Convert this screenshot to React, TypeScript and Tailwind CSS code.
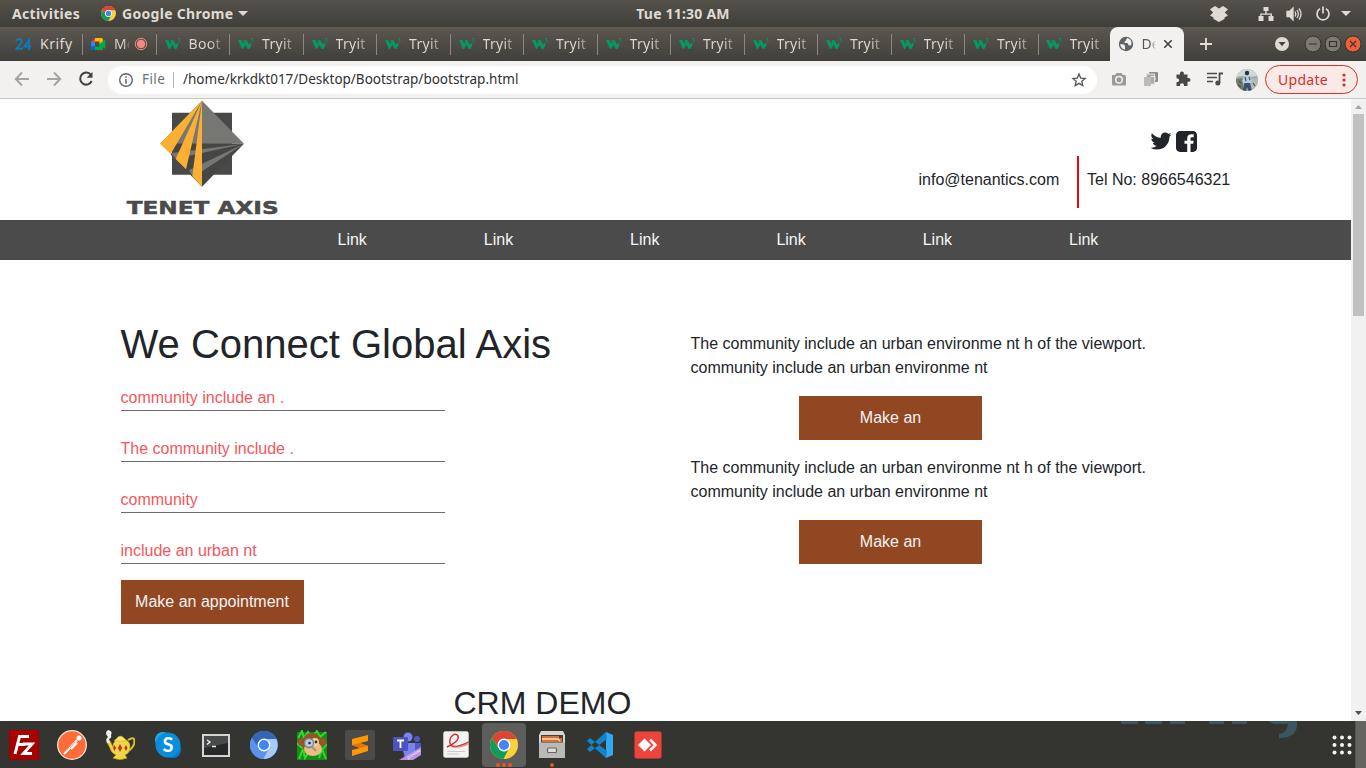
import React from "react";

const Chrome = ({ size, blue = false }: { size: number; blue?: boolean }) => (
  <svg width={size} height={size} viewBox="0 0 48 48" className="shrink-0">
    <circle cx="24" cy="24" r="24" fill={blue ? "#5a93ee" : "#fbd03a"} />
    <path d="M3.2 12A24 24 0 0 1 44.8 12L44.8 13.500H24A10.500 10.500 0 0 0 14.900 29.200Z" fill={blue ? "#3565b5" : "#db4437"} />
    <path d="M3.200 12A24 24 0 0 0 23 48L33.100 29.300A10.500 10.500 0 0 1 14.900 29.300Z" fill={blue ? "#5a93ee" : "#0f9d58"} />
    {blue && <path d="M44.800 13.500H24A10.500 10.500 0 0 1 33.100 29.300L23 48A24 24 0 0 0 44.800 13.500Z" fill="#a9c9fb" />}
    <circle cx="24" cy="24" r="11" fill="#fff" />
    <circle cx="24" cy="24" r="8.700" fill="#4285f4" />
  </svg>
);

const W3 = () => (
  <svg width="16" height="16" viewBox="0 0 16 16" className="shrink-0">
    <path d="M0 4H3.300L5.200 7.400 6.300 5.600 5.500 4H8.300L11 8.600 12.300 6.800 13.600 8.800 11.400 13H9.800L7.400 8.800 4.900 13H3.900Z" fill="#059862" />
    <path d="M13 2.500H15.200L14.100 3.900Q15.600 4.200 15.200 5.400Q14.600 6.500 12.900 5.900" fill="none" stroke="#059862" strokeWidth=".8" />
  </svg>
);

const Tab = ({ children, label }: { children: React.ReactNode; label: string }) => (
  <div className="flex h-[34px] w-[73.5px] shrink-0 items-center pl-[8px]">
    {children}
    <span className="ml-[8px] mt-[-2px] w-[34px] overflow-hidden whitespace-nowrap bg-gradient-to-r from-[#dedbd4] from-60% to-[#dedbd430] bg-clip-text text-[14px] tracking-[0.3px] text-transparent">{label}</span>
    <span className="ml-auto h-[21px] w-px bg-[#8b8880]" />
  </div>
);

const TabStrip = () => (
  <div className="flex h-[34px] bg-gradient-to-b from-[#5c5850] to-[#403f3a]">
    <div className="flex w-[83px] shrink-0 items-center pl-[15px]">
      <svg width="17" height="16" viewBox="0 0 17 16">
        <path d="M1 5Q1.500 3 4.500 3Q7 3.500 6.500 6Q6 8 1.500 12.700H8M14 14V4L9.300 10.600H16.500" fill="none" stroke="#0d79b5" strokeWidth="2" />
      </svg>
      <span className="ml-[8px] mt-[-2px] text-[14px] tracking-[0.5px] text-[#dedbd4]">Krify</span>
      <span className="ml-auto h-[21px] w-px bg-[#8b8880]" />
    </div>
    <div className="flex w-[73.5px] shrink-0 items-center pl-[8px]">
      <svg width="15" height="14" viewBox="0 0 15 14">
        <path d="M0 5L4 1V5Z" fill="#ea4335" />
        <path d="M0 5H4V9.500H0Z" fill="#2684fc" />
        <path d="M0 9.500H4V13H1.300Q0 13 0 11.700Z" fill="#0066da" />
        <path d="M4 1H10.500Q12 1 12 2.500V5L8.500 8V4.500H4Z" fill="#ffba00" />
        <path d="M4 9.500H8.500V7L14.300 2.300V12L12 10V11.700Q12 13 10.700 13H4Z" fill="#00ac47" />
      </svg>
      <span className="ml-[8px] mt-[-2px] w-[16px] overflow-hidden bg-gradient-to-r from-[#dedbd4] from-60% to-[#dedbd400] bg-clip-text text-[14px] text-transparent">Me</span>
      <svg width="14" height="14" viewBox="0 0 14 14" className="ml-[4px]">
        <circle cx="7" cy="7" r="5.700" fill="none" stroke="#f28b82" strokeWidth="1" />
        <circle cx="7" cy="7" r="4.200" fill="#f28b82" />
      </svg>
      <span className="ml-auto h-[21px] w-px bg-[#8b8880]" />
    </div>
    <Tab label="Boot"><W3 /></Tab>
    {Array.from({ length: 11 }, (_, i) => <Tab key={i} label="Tryit"><W3 /></Tab>)}
    <div className="flex w-[71px] shrink-0 items-center pl-[7px]">
      <W3 />
      <span className="ml-[8px] mt-[-2px] w-[34px] overflow-hidden bg-gradient-to-r from-[#dedbd4] from-60% to-[#dedbd430] bg-clip-text text-[14px] tracking-[0.3px] text-transparent">Tryit</span>
    </div>
    <div className="flex w-[74px] shrink-0 items-center rounded-t-[8px] bg-[#f2f1f0] pl-[8px]">
      <svg width="16" height="16" viewBox="0 0 16 16">
        <circle cx="8" cy="8" r="7.200" fill="#5f6368" />
        <path d="M2 8.300H5Q7 8.500 7 10.500V13.800Q3 13 2 8.300ZM9.500 2Q8 2.500 8 4.500Q6.500 4.500 6.500 7H9.500Q10 10 13 9.500Q14.500 5 11.500 3Z" fill="#f2f1f0" />
      </svg>
      <span className="ml-[8px] mt-[-2px] w-[14px] overflow-hidden bg-gradient-to-r from-[#55585b] from-60% to-transparent bg-clip-text text-[14px] text-transparent">De</span>
      <svg width="10" height="10" viewBox="0 0 10 10" className="ml-[7px]"><path d="M1.300 1.300L8.700 8.700M8.700 1.300L1.300 8.700" stroke="#3c4043" strokeWidth="1.600" /></svg>
    </div>
    <div className="flex flex-1 items-center pl-[16px]">
      <svg width="12" height="12" viewBox="0 0 12 12"><path d="M6 0V12M0 6H12" stroke="#e4e0d8" strokeWidth="1.800" /></svg>
      <svg width="14" height="14" viewBox="0 0 14 14" className="ml-auto"><circle cx="7" cy="7" r="7" fill="#dfdbd2" /><path d="M3.500 5H10.500L7 9.200Z" fill="#45433e" /></svg>
      <svg width="60" height="18" viewBox="0 0 60 18" className="ml-[12px]">
        <g stroke="#34332f">
          <circle cx="12" cy="9" r="8" fill="#7d7a72" /><circle cx="32" cy="9" r="8" fill="#7d7a72" /><circle cx="52" cy="9" r="8" fill="#ef6038" />
          <path d="M8 9H16M28.500 6.500H35.500V11.500H28.500ZM49 6L55 12M55 6L49 12" fill="none" strokeWidth="1.200" />
        </g>
      </svg>
      <span className="w-[5px]" />
    </div>
  </div>
);

const TopBar = () => (
  <div className="grid h-[27px] grid-cols-3 items-center bg-gradient-to-b from-[#55524b] to-[#3f3e39] text-[14px] font-bold text-[#dfdbd2]">
    <div className="flex items-center pl-[12px]">
      <span className="w-[89px] whitespace-nowrap tracking-[0.3px]">Activities</span>
      <Chrome size={15} />
      <span className="ml-[6px] w-[112px] whitespace-nowrap tracking-[0.300px]">Google Chrome</span>
      <svg width="10" height="5" viewBox="0 0 10 5" className="ml-[4px]"><path d="M0 0H10L5 5Z" fill="#dfdbd2" /></svg>
    </div>
    <div className="mt-[-1px] text-center tracking-[0.2px]">Tue 11:30 AM</div>
    <div className="flex items-center justify-end pr-[15px]">
      <svg width="20" height="18" viewBox="0 0 20 18" fill="#dfdbd2"><path d="M6 1L10 3.600 14 1 19 4.300 15.800 7.500 19 10.500 15.500 12.600V14L10 17 4.500 14V12.600L1 10.500 4.200 7.500 1 4.300Z" /></svg>
      <svg width="16" height="16" viewBox="0 0 16 16" className="ml-[29px]" fill="#dfdbd2"><path d="M5.500 1H10.500V5H8.700V7.500H14V10H15.500V15H10.500V10H12.500V8.800H3.500V10H5.500V15H.5V10H2.200V7.500H7.300V5H5.500Z" /></svg>
      <svg width="17" height="16" viewBox="0 0 17 16" className="ml-[12px]" fill="none" stroke="#dfdbd2" strokeWidth="1.300"><path d="M1 5.500H3.500L7 2V14L3.500 10.500H1Z" fill="#dfdbd2" /><path d="M9 5.500Q10.500 8 9 10.500M11 4Q13.700 8 11 12M13 2.500Q17 8 13 13.500" /></svg>
      <svg width="16" height="16" viewBox="0 0 16 16" className="ml-[12px]" fill="none" stroke="#dfdbd2" strokeWidth="1.700"><path d="M5 2.700A6 6 0 1 0 11 2.700M8 .5V7.500" /></svg>
      <svg width="10" height="5" viewBox="0 0 10 5" className="ml-[10px]"><path d="M0 0H10L5 5Z" fill="#dfdbd2" /></svg>
    </div>
  </div>
);

const Toolbar = () => (
  <div className="flex h-[38px] items-center border-b border-[#c9c8c7] bg-[#f2f1f0]">
    <svg width="108" height="37" viewBox="0 0 108 37" className="shrink-0" fill="none" strokeWidth="2">
      <path d="M29 18H16M22 11.500L15.800 18 22 24.500M47 18H60M54 11.500L60.200 18 54 24.500" stroke="#a5a4a3" />
      <path d="M91 14A6 6 0 1 0 91.700 20" stroke="#424242" />
      <path d="M92.500 11V16.800H86.500Z" fill="#424242" />
    </svg>
    <div className="flex h-[28px] w-[989px] shrink-0 items-center rounded-full bg-white pl-[11px] text-[13.500px]">
      <svg width="14" height="14" viewBox="0 0 14 14" fill="none" stroke="#5f6368"><circle cx="7" cy="7" r="6.300" strokeWidth="1.400" /><path d="M7 6V10.700M7 3.300V4.800" strokeWidth="1.500" /></svg>
      <span className="ml-[9px] w-[31px] tracking-[0.4px] text-[#6b7278]">File</span>
      <span className="h-[16px] w-px bg-[#b7babd]" />
      <span className="ml-[9px] whitespace-nowrap text-[#303134]">/home/krkdkt017/Desktop/Bootstrap/bootstrap.html</span>
      <svg width="16" height="16" viewBox="0 0 24 24" className="ml-auto mr-[10px]"><path d="M12 3L14.600 9.100 21.200 9.700 16.200 14 17.700 20.500 12 17.100 6.300 20.500 7.800 14 2.800 9.700 9.400 9.100Z" fill="none" stroke="#55585b" strokeWidth="2" /></svg>
    </div>
    <svg width="139" height="37" viewBox="0 0 139 37" className="shrink-0">
      <path d="M15 14H18L19.500 12H24.500L26 14H27.500Q29 14 29 15.500V23Q29 24.500 27.500 24.500H16.500Q15 24.500 15 23Z" fill="#9b9a99" />
      <circle cx="22" cy="18.700" r="3.300" fill="none" stroke="#f2f1f0" strokeWidth="1.500" />
      <rect x="52" y="11" width="9" height="10" rx="1" fill="#8e8d8c" /><rect x="49.500" y="13" width="8" height="10" fill="#aaa" stroke="#ddd" /><rect x="47" y="16" width="7" height="9" fill="#bbb" /><path d="M54 15.500H58V19" stroke="#eee" fill="none" />
      <path d="M79.500 13.500H83Q82.500 10.500 85 10.500Q87.300 10.500 86.800 13.500H90.500V17Q93.500 16.500 93.500 19Q93.500 21.200 90.500 20.800V25H87Q87.200 22.200 85 22.200Q82.800 22.200 83 25H79.500V21.200Q82.200 21.200 82.200 19.200Q82.200 17.200 79.500 17.200Z" fill="#474747" />
      <path d="M110 12.500H120M110 16.500H120M110 20.500H116" stroke="#4c4c4c" strokeWidth="1.600" /><path d="M122.500 22V12.500H126" fill="none" stroke="#4c4c4c" strokeWidth="1.800" /><circle cx="120.800" cy="22" r="2.500" fill="#4c4c4c" />
    </svg>
    <svg width="22" height="22" viewBox="0 0 22 22" className="shrink-0">
      <defs><clipPath id="avatar"><circle cx="11" cy="11" r="11" /></clipPath></defs>
      <g clipPath="url(#avatar)"><path d="M0 0H22V22H0Z" fill="#a3a79d" /><path d="M0 0H22V7L14 8 7 7 0 8Z" fill="#cbd8dc" /><path d="M0 10L7 9V22H0Z" fill="#737c6b" /><path d="M14 10L22 9V22H15Z" fill="#b5b9b6" /><path d="M8 6Q11 3 13.500 6L16 11 14 16 8 15 6 12Z" fill="#b5cbe0" /><path d="M8.500 14H14L16 22H12.500L11 18 10 22H6.500Z" fill="#39516b" /><circle cx="11" cy="4" r="2.200" fill="#37302a" /><path d="M3 12L5 14M2 16L5 18M17 14L19 17M9 8L10 12M13 8L14 11" stroke="#4a5549" strokeWidth="1.200" /></g>
    </svg>
    <div className="ml-[7px] flex h-[29px] w-[93px] shrink-0 items-center rounded-full border border-[#d93025] bg-[#fae9e7] pl-[12px] text-[14px] text-[#d2302a]">
      <span className="w-[52px] tracking-[0.300px]">Update</span>
      <svg width="4" height="14" viewBox="0 0 4 14" className="ml-[12px]" fill="#d2302a"><circle cx="2" cy="2" r="1.600" /><circle cx="2" cy="7" r="1.600" /><circle cx="2" cy="12" r="1.600" /></svg>
    </div>
  </div>
);

const Logo = () => (
  <svg width="190" height="121" viewBox="0 3 570 363" className="ml-[110px] shrink-0">
    <path d="M186 44H366V230H186Z" fill="#494a48" />
    <path d="M276 8L402 137H150Z" fill="#777874" />
    <path d="M200 137H402L276 266 182 170Z" fill="#464745" />
    <path d="M402 137L182 166 197 182ZM402 137L236 217 250 237Z" fill="#767773" />
    <path d="M276 8L150 137 182 168ZM276 8L197 183 228 214ZM276 8L247 235 276 266Z" fill="#fbb034" />
    <text x="50" y="347" textLength="456" lengthAdjust="spacingAndGlyphs" fontFamily="DejaVu Sans" fontWeight="700" fontSize="55" fill="#4b4b4b" stroke="#4b4b4b" strokeWidth="1.5">TENET AXIS</text>
  </svg>
);

const Header = () => (
  <header className="flex h-[121px]">
    <Logo />
    <div className="ml-[618px] flex-1">
      <div className="flex h-[57px] items-end gap-[3px] pb-[3px] pl-[230.5px]">
        <svg width="24" height="24" viewBox="0 0 1792 1792" fill="#212529"><path d="M1684 408q-67 98-162 167 1 14 1 42 0 130-38 259.500t-115.500 248.500-184.500 210.500-258 146-323 54.500q-271 0-496-145 35 4 78 4 225 0 401-138-105-2-188-64.500t-114-159.500q33 5 61 5 43 0 85-11-112-23-185.500-111.500t-73.500-205.500v-4q68 38 146 41-66-44-105-115t-39-154q0-88 44-163 121 149 294.500 238.500t371.500 99.500q-8-38-8-74 0-134 94.500-228.500t228.500-94.500q140 0 236 102 109-21 205-78-37 115-142 178 93-10 186-50z" /></svg>
        <svg width="21" height="21" viewBox="0 128 1536 1536" fill="#212529" className="mb-[1px]"><path d="M1248 128q119 0 203.500 84.500t84.500 203.500v960q0 119-84.500 203.500t-203.500 84.500h-188v-595h199l30-232h-229v-148q0-56 23.500-84t91.500-28l122-1v-207q-63-9-178-9-136 0-217.500 80t-81.500 226v171h-200v232h200v595h-532q-119 0-203.500-84.500t-84.500-203.500v-960q0-119 84.500-203.500t203.500-84.500h960z" /></svg>
      </div>
      <div className="flex h-[52px]">
        <span className="w-[159px] pl-[0.5px] pt-[12px]">info@tenantics.com</span>
        <span className="h-[52px] w-[2px] bg-[#f4000f]" />
        <span className="ml-[8px] pt-[12px]">Tel No: 8966546321</span>
      </div>
    </div>
  </header>
);

const Offer = () => (
  <div className="h-[124px]">
    <p>The community include an urban environme nt h of the viewport.</p>
    <p>community include an urban environme nt</p>
    <button className="ml-[108.5px] mt-[16px] block h-[44px] w-[183px] bg-[#914722] text-[#f4f2f1]">Make an</button>
  </div>
);

const Page = () => (
  <main className="h-[622px] w-[1351px] overflow-hidden bg-white font-['Liberation_Sans',sans-serif] text-[16px] leading-[24px] text-[#212529]">
    <Header />
    <nav className="flex h-[40px] items-center bg-[#4b4b4b] pl-[337.500px] text-[#f5f6f7]">
      {Array.from({ length: 6 }, (_, i) => <a key={i} className="w-[146.300px] shrink-0">Link</a>)}
    </nav>
    <section className="flex h-[423px] pl-[120.5px] pt-[60px]">
      <div className="w-[570px]">
        <h1 className="mb-[17px] text-[40px] leading-[48px]">We Connect Global Axis</h1>
        {["community include an .", "The community include .", "community", "include an urban nt"].map((t) => (
          <div key={t} className="mb-[25px] h-[26px] w-[324px] border-b border-[#6c6c6c] pt-px leading-[24px] text-[#f4575c]">{t}</div>
        ))}
        <button className="mt-[-9px] block h-[44px] w-[183px] bg-[#914722] text-[#f4f2f1]">Make an appointment</button>
      </div>
      <div className="pt-[12px]"><Offer /><Offer /></div>
    </section>
    <h2 className="ml-[453.500px] mt-px text-[32px] leading-[38px]">CRM DEMO</h2>
  </main>
);

const icons: React.ReactNode[] = [
  <g key="fz"><path d="M0 0H30V30H0Z" fill="#b20000" stroke="#850000" strokeWidth="1.500" strokeDasharray="2 2" /><path d="M0 8L30 0V30H0Z" fill="#9b0000" opacity=".5" /><path d="M6 24L10.500 6.500H20M8.500 14.500H16M14 14H23L14.500 23.500H23" fill="none" stroke="#fff" strokeWidth="3" /></g>,
  <g key="pm"><circle cx="15" cy="15" r="14.300" fill="#ff6c37" stroke="#f2e5df" strokeWidth="1.300" /><circle cx="22" cy="8" r="2.500" fill="#fff" /><path d="M20 10L12 19M20 13L14 19M12 19L7 24" stroke="#fff" strokeWidth="2" /><path d="M18 12L13 18" stroke="#ff6c37" strokeWidth=".8" /></g>,
  <g key="tea"><path d="M23 10Q31 5 29 14Q28 18 23 21" fill="none" stroke="#dfc331" strokeWidth="2" /><path d="M2 12L5 11 8 17Q8 9 16 9Q25 9 25 17Q25 23 20 25L22 28Q15 31 8 28L11 25Q6 23 5 18Z" fill="#f0d646" stroke="#c3a318" strokeWidth=".7" /><path d="M12 8Q15 4 19 8L22 11H9Z" fill="#f7e473" stroke="#c3a318" strokeWidth=".5" /><path d="M15 14L17 18 15 22 13 18ZM9.500 15L11 18 9.500 21 8 18ZM21 15L22.500 18 21 21 19.500 18Z" fill="#c72b29" /><path d="M2 13Q0 9 3 7Q-1 3 3 0Q8 1 6 5Q7 8 4 9L5 12Z" fill="#eee" /></g>,
  <g key="sk"><circle cx="10" cy="10" r="8" fill="#29a8e5" /><circle cx="20" cy="20" r="8" fill="#0878ce" /><circle cx="15" cy="15" r="12.500" fill="#078fdc" /><text x="15" y="22" textAnchor="middle" fontSize="20" fontWeight="700" fontFamily="Lato" fill="#fff">S</text></g>,
  <g key="term"><path d="M1 4H29V27H1Z" fill="#d4d4d0" /><path d="M3 6H27V25H3Z" fill="#272829" /><path d="M3 6H27V13L3 18Z" fill="#484949" /><path d="M6 10L9 12 6 14.500M11 16.500H15" fill="none" stroke="#eee" strokeWidth="1.400" /></g>,
  null,
  <g key="mon"><path d="M0 2H30V30H0Z" fill="#168d1a" /><path d="M1 8L5 1 7 8 11 2 14 8 20 1 23 7 29 2M2 29L6 19 8 28 12 22M29 29L25 19 22 28M0 13L5 18M30 14L26 19" fill="none" stroke="#31da2a" strokeWidth="2" /><circle cx="5" cy="12" r="4" fill="#9b572a" /><circle cx="25" cy="12" r="4" fill="#9b572a" /><ellipse cx="15" cy="14" rx="10" ry="11" fill="#985124" /><ellipse cx="16" cy="19" rx="9" ry="7" fill="#ecbc83" /><circle cx="18" cy="12" r="4" fill="#f0cda2" /><circle cx="19" cy="12" r="1.400" fill="#332" /><circle cx="12" cy="13" r="4.500" fill="#b3cce0" stroke="#75838e" strokeWidth="1.300" /><circle cx="12.500" cy="13" r="1.300" fill="#332" /><path d="M15 17L19 21" stroke="#999" strokeWidth="2" /></g>,
  <g key="sub"><rect width="30" height="30" rx="2" fill="#4b4b4c" /><path d="M7 9L23 5V11L15 13 23 16V21L7 26V20L15 18 7 15Z" fill="#ff9800" /><path d="M7 15L15 18 23 16 15 13Z" fill="#dc7614" /></g>,
  <g key="teams"><circle cx="15" cy="7" r="4.500" fill="#7b83eb" /><circle cx="24" cy="9" r="3" fill="#5059c9" /><path d="M20 13H28V24H20Z" fill="#5059c9" /><path d="M8 13H22V28H12Z" fill="#7b83eb" /><rect x="0" y="7" width="15" height="14" rx="1" fill="#4b53bc" /><path d="M4 10.500H11M7.500 10.500V18" stroke="#fff" strokeWidth="1.800" /><path d="M6 30L28 17V25L20 30Z" fill="#b993df" /><text transform="translate(15 29) rotate(-31)" fontFamily="Open Sans" fontSize="4" fill="#fff">preview</text></g>,
  <g key="pdf"><rect x="2.500" y="1.500" width="25" height="26" rx="2" fill="#f4f3f2" stroke="#ccc" strokeWidth=".7" /><path d="M6 17Q19 11 17 6Q14 2 10 7Q7 13 11 16Q16 18 28 12" fill="none" stroke="#d02932" strokeWidth="1.400" /><path d="M9 16.500Q18 18 28 12L28 14Q18 20 9 16.500Z" fill="#eb8a8c" /><path d="M6 21.500H24M6 24H18" stroke="#ccc" strokeWidth="1" /></g>,
  null,
  <g key="files"><path d="M4 1H26L28 5V28H2V5Z" fill="#d6d5d2" /><path d="M4 5H26V13H4Z" fill="#463e37" /><path d="M5 6H22V8H25V12H5V9Z" fill="#d86e35" /><path d="M5 9H21L23 11" fill="none" stroke="#ffe2bd" strokeWidth="1.300" /><path d="M2 12.500H28V28H2Z" fill="#b9b9b7" /><rect x="10.500" y="18" width="9" height="4.500" rx="1" fill="#ddd" stroke="#666" strokeWidth="1.200" /></g>,
  <g key="code"><path d="M21 2L28 5V25L21 28Z" fill="#32a9f1" /><path d="M21 2L2 19 5 22 22 9ZM21 28L2 11 5 8 22 21Z" fill="#1383cb" /></g>,
  <g key="any"><rect x="1.500" y="1.500" width="27" height="27" rx="2" fill="#ef443b" /><path d="M11.500 8.500L18 15 11.500 21.500 5 15Z" fill="#fff" /><path d="M17 9.500L22.500 15 17 20.500" fill="none" stroke="#fff" strokeWidth="2.500" /></g>,
];

const Dock = () => (
  <footer className="flex h-[47px] overflow-hidden bg-[#343430]">
    {icons.map((icon, i) => (
      <div key={i} className="relative flex w-[48px] shrink-0 items-center justify-center">
        {i === 10 && <span className="absolute left-[2px] top-[2px] h-[44px] w-[44px] rounded-[4px] bg-[#5d5d5b]" />}
        <span className="relative">
          {icon ? <svg width="30" height="30" viewBox="0 0 30 30">{icon}</svg> : <Chrome size={28} blue={i === 5} />}
        </span>
        {i === 10 && <svg width="16" height="4" viewBox="0 0 16 4" className="absolute bottom-[1px] left-[16px]" fill="#e95420"><circle cx="2" cy="2" r="2" /><circle cx="8" cy="2" r="2" /><circle cx="14" cy="2" r="2" /></svg>}
        {i === 11 && <span className="absolute bottom-[1px] left-[22px] h-[4px] w-[4px] rounded-full bg-[#e95420]" />}
      </div>
    ))}
    <svg width="235" height="47" viewBox="1120 721 235 47" className="ml-auto shrink-0">
      <path d="M1121 721H1138V724H1121ZM1145 721H1162V724H1145ZM1170 721H1185V724H1170ZM1209 721H1224V724H1209ZM1232 721H1247V724H1232ZM1268 721H1297Q1299 738 1279 738V734Q1287 733 1288 724H1274Z" fill="#3a5560" />
      <g fill="#f2f2f0">
        {[737.500, 745, 752.500].map((y) => [1334.500, 1342, 1349.500].map((x) => <circle key={`${x}-${y}`} cx={x} cy={y} r="2" />))}
      </g>
    </svg>
    <div className="w-[11px] shrink-0 border-l border-[#55544f] bg-[#65645f]" />
  </footer>
);

export default function App() {
  return (
    <div className="h-[768px] w-[1366px] overflow-hidden bg-white font-['Noto_Sans','Open_Sans',sans-serif]">
      <TopBar />
      <TabStrip />
      <Toolbar />
      <div className="flex">
        <Page />
        <div className="flex h-[622px] w-[15px] flex-col items-center bg-[#f1f1f1]">
          <svg width="15" height="15" viewBox="0 0 15 15"><path d="M4 10H11L7.500 6Z" fill="#a3a3a3" /></svg>
          <div className="h-[202px] w-[11px] bg-[#c1c1c1]" />
          <svg width="15" height="15" viewBox="0 0 15 15" className="mt-auto"><path d="M4 5H11L7.500 9Z" fill="#505050" /></svg>
        </div>
      </div>
      <Dock />
    </div>
  );
}
